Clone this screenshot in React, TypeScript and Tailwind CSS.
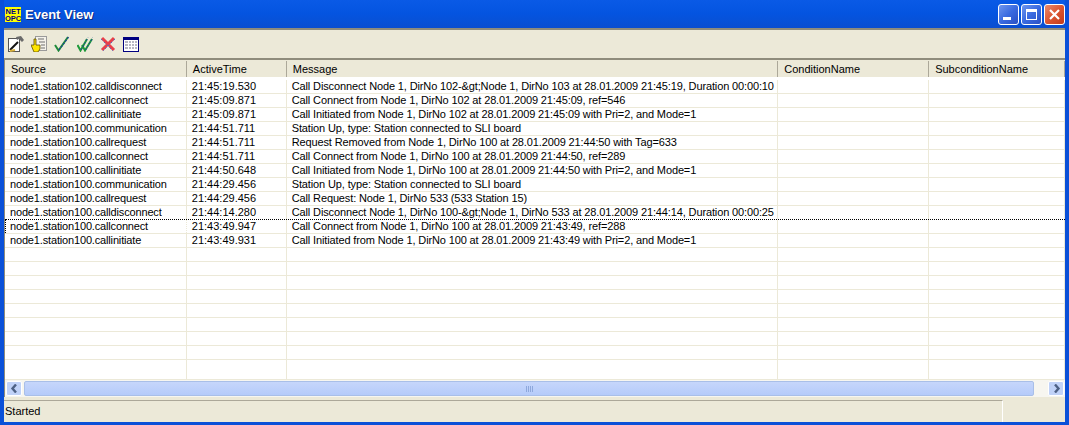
const cols = ["w-[182px]", "w-[100px]", "w-[492px]", "w-[151px]", "w-[136px]"];
const headers = ["Source", "ActiveTime", "Message", "ConditionName", "SubconditionName"];
const rows = [
  ["node1.station102.calldisconnect", "21:45:19.530", "Call Disconnect Node 1, DirNo 102-&gt;Node 1, DirNo 103 at 28.01.2009 21:45:19, Duration 00:00:10"],
  ["node1.station102.callconnect", "21:45:09.871", "Call Connect from Node 1, DirNo 102 at 28.01.2009 21:45:09, ref=546"],
  ["node1.station102.callinitiate", "21:45:09.871", "Call Initiated from Node 1, DirNo 102 at 28.01.2009 21:45:09 with Pri=2, and Mode=1"],
  ["node1.station100.communication", "21:44:51.711", "Station Up, type: Station connected to SLI board"],
  ["node1.station100.callrequest", "21:44:51.711", "Request Removed from Node 1, DirNo 100 at 28.01.2009 21:44:50 with Tag=633"],
  ["node1.station100.callconnect", "21:44:51.711", "Call Connect from Node 1, DirNo 100 at 28.01.2009 21:44:50, ref=289"],
  ["node1.station100.callinitiate", "21:44:50.648", "Call Initiated from Node 1, DirNo 100 at 28.01.2009 21:44:50 with Pri=2, and Mode=1"],
  ["node1.station100.communication", "21:44:29.456", "Station Up, type: Station connected to SLI board"],
  ["node1.station100.callrequest", "21:44:29.456", "Call Request: Node 1, DirNo 533 (533 Station 15)"],
  ["node1.station100.calldisconnect", "21:44:14.280", "Call Disconnect Node 1, DirNo 100-&gt;Node 1, DirNo 533 at 28.01.2009 21:44:14, Duration 00:00:25"],
  ["node1.station100.callconnect", "21:43:49.947", "Call Connect from Node 1, DirNo 100 at 28.01.2009 21:43:49, ref=288"],
  ["node1.station100.callinitiate", "21:43:49.931", "Call Initiated from Node 1, DirNo 100 at 28.01.2009 21:43:49 with Pri=2, and Mode=1"],
];
const empty = Array.from({ length: 8 }, () => ["", "", ""]);

function Logo() {
  return (
    <div className="w-[16px] h-[15px] bg-[#ffff00] flex flex-col items-center justify-center text-[#000080] font-bold text-[7.5px] leading-[7px] font-['Liberation_Sans',sans-serif]">
      <span>NET</span>
      <span>OPC</span>
    </div>
  );
}

function WinBtn({ red, children }: { red?: boolean; children: React.ReactNode }) {
  return (
    <div className={"w-[21px] h-[21px] rounded-[3px] border border-white flex items-center justify-center " + (red ? "bg-gradient-to-br from-[#e8896c] via-[#dc5530] to-[#c23a1a]" : "bg-gradient-to-br from-[#6f96ee] via-[#3a6ae0] to-[#2a50c4]")}>
      {children}
    </div>
  );
}

function Toolbar() {
  return (
    <div className="h-[32px] shrink-0 flex items-center gap-[7px] pl-[4px] bg-[#ece9d8] border-t-2 border-b-2 border-t-[#8f8c7c] border-b-[#8f8c7c]">
      <svg width="16" height="16" viewBox="0 0 16 16" shapeRendering="crispEdges">
        <rect x="0.5" y="2.5" width="11" height="13" fill="#fff" stroke="#555" />
        <path d="M2 14 L10 6" stroke="#111" strokeWidth="2" shapeRendering="auto" />
        <path d="M2 15 L7 14" stroke="#d8b03a" strokeWidth="2" shapeRendering="auto" />
        <path d="M8 1 L13 0 L16 4 L14 6 L11 3 L9 4 Z" fill="#6b6b6b" shapeRendering="auto" />
      </svg>
      <svg width="16" height="16" viewBox="0 0 16 16">
        <rect x="4.5" y="0.5" width="11" height="14" fill="#f4f2ea" stroke="#9a9a9a" />
        <path d="M7 3h6M8 6h6M10 9h4M10 12h4" stroke="#6f6f6f" strokeWidth="1" />
        <path d="M3 3h2v6h4v4l-2 3H3L0 9h3Z" fill="#ffe600" stroke="#5c4a00" strokeWidth="0.8" />
      </svg>
      <svg width="16" height="16" viewBox="0 0 16 16">
        <path d="M1 9 L4.5 14.5 L14 1" fill="none" stroke="#1f8a3a" strokeWidth="2" />
        <path d="M5 14 L15 0.5" fill="none" stroke="#1f3f9c" strokeWidth="1.2" strokeDasharray="2 1.5" />
      </svg>
      <svg width="16" height="16" viewBox="0 0 16 16">
        <path d="M0.5 9 L3.5 14.5 L10 3" fill="none" stroke="#1f9a3a" strokeWidth="2" />
        <path d="M5 9 L8 14.5 L15 3" fill="none" stroke="#1f9a3a" strokeWidth="2" />
        <path d="M4 14 L11 1.5 M8.5 14 L16 1.5" fill="none" stroke="#1f3f9c" strokeWidth="1" strokeDasharray="2 1.5" />
      </svg>
      <svg width="16" height="16" viewBox="0 0 16 16">
        <path d="M2 2 L14 14 M14 2 L2 14" stroke="#e8404a" strokeWidth="3" />
        <path d="M1 3 L13 15 M15 3 L3 15" stroke="#5a6cc0" strokeWidth="1" strokeDasharray="2 2" />
      </svg>
      <svg width="16" height="16" viewBox="0 0 16 16" shapeRendering="crispEdges">
        <rect x="0.5" y="1.5" width="15" height="14" fill="#fff" stroke="#000080" />
        <rect x="0" y="1" width="16" height="3" fill="#000080" />
        <path d="M2 5h12v1.5H2zM2 8h12v1.5H2zM2 11h12v1.5H2z" fill="#b8b8c4" />
        <path d="M5.5 5v9M8.5 5v9M11.5 5v9" stroke="#fff" />
      </svg>
    </div>
  );
}

const spacing = ["tracking-[-0.16px]", "", "tracking-[-0.13px]", "", ""];

function Row({ cells, focus, last }: { cells: string[]; focus?: boolean; last?: boolean }) {
  const all = [...cells, "", ""];
  return (
    <div className={"flex h-[14px] shrink-0 box-border border-b " + (last ? "border-b-black border-dotted" : "border-b-[#ece9d8]")}>
      {all.map((c, i) => (
        <div key={i} className={"h-full box-border border-r border-r-[#ece9d8] whitespace-nowrap overflow-hidden leading-[13px] pl-[5px] " + cols[i] + " " + spacing[i] + (focus && i === 0 ? " border-l border-dotted border-l-black !pl-[4px]" : "")}>
          {c}
        </div>
      ))}
    </div>
  );
}

export default function App() {
  return (
    <div className="w-[1069px] h-[425px] overflow-hidden bg-[#0a50d8] flex flex-col text-[11px] text-black font-['Liberation_Sans',sans-serif] px-[4px] pb-[3px]">
      <div className="h-[28px] shrink-0 flex items-center bg-gradient-to-b from-[#0a5ae6] via-[#0454e0] to-[#0a4ed0] pl-[1px] pr-[0px] pt-[1px]">
        <Logo />
        <span className="ml-[4px] flex-1 text-white font-bold text-[13px] font-['Liberation_Sans',sans-serif] [text-shadow:1px_1px_0_#0a2a80]">Event View</span>
        <div className="flex gap-[2px]">
          <WinBtn>
            <div className="w-[8px] h-[3px] bg-white mt-[8px] mr-[3px]" />
          </WinBtn>
          <WinBtn>
            <div className="w-[11px] h-[11px] border border-white border-t-[3px]" />
          </WinBtn>
          <WinBtn red>
            <svg width="13" height="13" viewBox="0 0 13 13">
              <path d="M2 2 L11 11 M11 2 L2 11" stroke="#fff" strokeWidth="2.2" />
            </svg>
          </WinBtn>
        </div>
      </div>
      <Toolbar />
      <div className="flex-1 min-h-0 flex flex-col bg-white border-l border-l-[#8f8c7c]">
        <div className="h-[18px] shrink-0 flex bg-[#ece9d8] border-b border-b-[#fff] pt-[1px]">
          {headers.map((h, i) => (
            <div key={h} className={"h-full box-border border-r border-r-[#aca899] leading-[16px] pl-[6px] " + cols[i]}>
              {h}
            </div>
          ))}
        </div>
        <div className="flex-1 min-h-0 overflow-hidden flex flex-col pt-[2px]">
          {rows.map((r, i) => (
            <Row key={i} cells={r} last={i === 9} focus={i === 10} />
          ))}
          {empty.map((r, i) => (
            <Row key={i} cells={r} />
          ))}
          <div className="flex flex-1">
            {cols.map((c, i) => (
              <div key={i} className={"h-full border-r border-r-[#ece9d8] " + c} />
            ))}
          </div>
        </div>
        <div className="h-[18px] shrink-0 flex items-start pt-[1px] bg-[#f7f6f0] border-t border-t-[#ece9d8] pr-[1px]">
          <div className="w-[16px] h-[15px] ml-[1px] rounded-[2px] bg-[#c0d2f8] border border-white flex items-center justify-center">
            <svg width="9" height="9" viewBox="0 0 9 9"><path d="M6 0.5 L2.5 4.5 L6 8.5" fill="none" stroke="#4d6185" strokeWidth="2.4" /></svg>
          </div>
          <div className="ml-[2px] w-[1010px] h-[15px] rounded-[2px] border border-[#a9bfe8] bg-gradient-to-b from-[#c6d6fb] to-[#b5cbfa] flex items-center justify-center gap-[1px]">
            {[0, 1, 2, 3].map((k) => (
              <div key={k} className="w-[1px] h-[6px] bg-[#8ea8dc]" />
            ))}
          </div>
          <div className="flex-1" />
          <div className="w-[16px] h-[15px] rounded-[2px] bg-[#c0d2f8] border border-white flex items-center justify-center">
            <svg width="9" height="9" viewBox="0 0 9 9"><path d="M3 0.5 L6.5 4.5 L3 8.5" fill="none" stroke="#4d6185" strokeWidth="2.4" /></svg>
          </div>
        </div>
      </div>
      <div className="h-[25px] shrink-0 flex bg-[#ece9d8] pt-[3px]">
        <div className="w-[999px] h-full box-border border-t border-t-[#aca899] border-r border-r-white pl-[1px] leading-[20px]">Started</div>
        <div className="flex-1" />
      </div>
    </div>
  );
}
